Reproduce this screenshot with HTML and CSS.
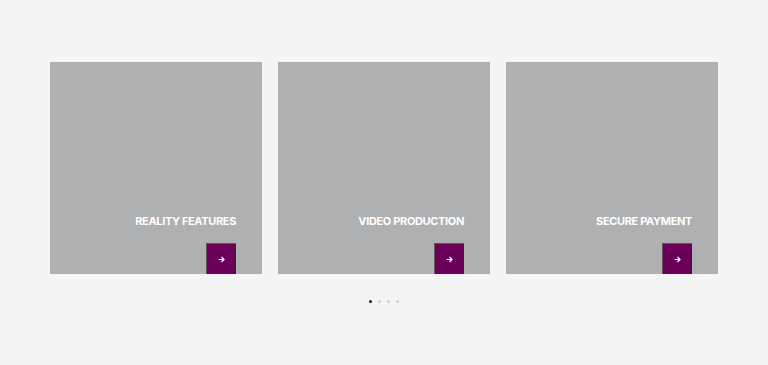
FILE: index.html
```html
<!DOCTYPE html>
<html lang="en">
<head>
    <meta charset="UTF-8">
    <meta name="viewport" content="width=device-width, initial-scale=1.0">
    <title>Services</title>
    <link rel="stylesheet" href="styles.css">
</head>
<body>
    <section class="slider">
        <div class="slides">
            <div class="card">
                <h3 class="card-title">REALITY FEATURES</h3>
                <a class="card-btn" href="#"><svg width="7" height="7" viewBox="0 0 7 7"><path d="M0.5 3.5H6M3.5 1L6 3.5L3.5 6" fill="none" stroke="#fff" stroke-width="1.2"/></svg></a>
            </div>
            <div class="card">
                <h3 class="card-title">VIDEO PRODUCTION</h3>
                <a class="card-btn" href="#"><svg width="7" height="7" viewBox="0 0 7 7"><path d="M0.5 3.5H6M3.5 1L6 3.5L3.5 6" fill="none" stroke="#fff" stroke-width="1.2"/></svg></a>
            </div>
            <div class="card">
                <h3 class="card-title">SECURE PAYMENT</h3>
                <a class="card-btn" href="#"><svg width="7" height="7" viewBox="0 0 7 7"><path d="M0.5 3.5H6M3.5 1L6 3.5L3.5 6" fill="none" stroke="#fff" stroke-width="1.2"/></svg></a>
            </div>
        </div>
        <div class="dots">
            <span class="dot active"></span>
            <span class="dot"></span>
            <span class="dot"></span>
            <span class="dot"></span>
        </div>
    </section>
</body>
</html>
```

FILE: styles.css
```css
body {
    margin: 0;
    background: #f4f4f4;
    font-family: Inter, "Liberation Sans", sans-serif;
}
.slider {
    padding: 62px 50px 0;
}
.slides {
    display: flex;
    gap: 16px;
}
.card {
    width: 212px;
    height: 212px;
    background: #afb0b1;
    display: flex;
    flex-direction: column;
    align-items: flex-end;
    justify-content: flex-end;
    padding-right: 26px;
    box-sizing: border-box;
}
.card-title {
    margin: 0 0 15px;
    color: #fff;
    font-size: 11px;
    font-weight: 700;
    letter-spacing: -0.35px;
    line-height: 14px;
}
.card-btn {
    width: 30px;
    height: 31px;
    background: #6b0059;
    border-top: 1px solid #5a5a5a;
    border-left: 1px solid #5a5a5a;
    box-sizing: border-box;
    display: flex;
    align-items: center;
    justify-content: center;
}
.dots {
    display: flex;
    justify-content: center;
    gap: 6px;
    margin-top: 26px;
}
.dot {
    width: 3px;
    height: 3px;
    border-radius: 50%;
    background: #cfcfcf;
}
.dot.active {
    background: #2a0a2a;
}
```
